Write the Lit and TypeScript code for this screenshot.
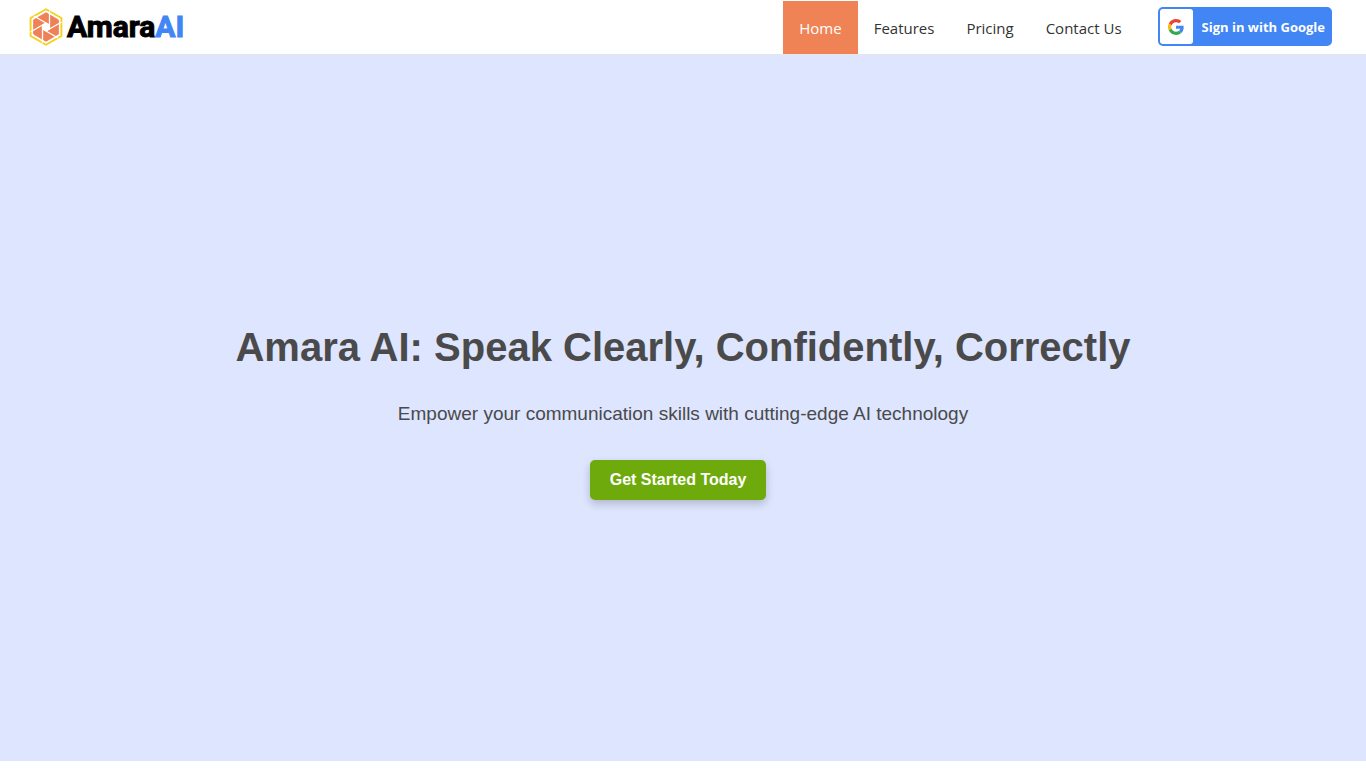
import { LitElement, html, css, svg } from "lit";
import { customElement, state } from "lit/decorators.js";

const links = ["Home", "Features", "Pricing", "Contact Us"];
const bladeAngles = [0, 60, 120, 180, 240, 300];

@customElement("app-root")
export class AppRoot extends LitElement {
  static styles = css`
    :host {
      display: block;
      min-height: 100vh;
      background: #fff;
      font-family: "Liberation Sans", Arial, sans-serif;
      color: #4a4a4a;
    }
    .header {
      display: flex;
      justify-content: space-between;
      align-items: stretch;
      height: 54px;
      padding: 0 34px 0 29px;
      border-bottom: 1px solid #e7e7e7;
    }
    .brand {
      display: flex;
      align-items: center;
      gap: 4px;
      text-decoration: none;
      color: #000;
    }
    .mark {
      width: 34px;
      height: 38px;
    }
    .name {
      font: bold 30px/54px Roboto, sans-serif;
      -webkit-text-stroke: 1px currentColor;
      stroke-linejoin: round;
    }
    .accent {
      color: #4285f4;
    }
    .menu {
      display: flex;
      align-items: stretch;
    }
    .nav {
      display: flex;
      margin-top: 1px;
    }
    .link {
      display: flex;
      align-items: center;
      padding: 0 16px;
      font: 400 15px/20px "Open Sans", "Noto Sans", sans-serif;
      color: #333;
      text-decoration: none;
    }
    .link.active {
      background: #f08355;
      color: #fff;
    }
    .google {
      display: flex;
      align-items: center;
      align-self: center;
      gap: 9px;
      height: 39px;
      margin: 0 0 1px 20px;
      padding: 2px 7px 2px 2px;
      border: 0;
      border-radius: 5px;
      background: #4285f4;
      color: #fff;
      font: 700 13px/20px "Open Sans", "Noto Sans", sans-serif;
      cursor: pointer;
    }
    .tile {
      display: grid;
      place-items: center;
      width: 33px;
      height: 35px;
      border-radius: 3px;
      background: #fff;
    }
    .g {
      width: 16px;
      height: 16px;
    }
    .hero {
      display: flex;
      flex-direction: column;
      align-items: center;
      justify-content: center;
      box-sizing: border-box;
      min-height: calc(100vh - 62px);
      padding: 6px 20px 0;
      background: #dde5ff;
      text-align: center;
    }
    .title {
      margin: 0 0 32px;
      font-size: 40px;
      line-height: 48px;
    }
    .lead {
      margin: 0 0 35px;
      font-size: 19px;
      line-height: 22px;
    }
    .cta {
      height: 40px;
      margin-right: 10px;
      padding: 0 20px;
      border: 0;
      border-radius: 5px;
      background: #6eaa0b;
      color: #fff;
      font: bold 16px/20px "Liberation Sans", Arial, sans-serif;
      box-shadow: 0 4px 8px rgba(0, 0, 0, 0.2);
      cursor: pointer;
    }
  `;

  @state() private current = "Home";

  private mark() {
    return html`<svg class="mark" viewBox="0 0 34 38" aria-hidden="true">
      <path d="M17 1.200 32.400 10v18L17 36.800 1.600 28V10Z" fill="#fff" stroke="#f8cf1c" stroke-width="1.900" stroke-linejoin="round" />
      <path d="M17 4.800 29.300 11.900v14.200L17 33.200 4.700 26.100V11.900Z" fill="#ef8157" stroke="#ef8157" stroke-width="1" stroke-linejoin="round" />
      <path d="M17 14.400 21 16.700v4.600L17 23.600l-4-2.300v-4.600Z" fill="#fff" />
      ${bladeAngles.map(
        (a) => svg`<path d="M20.500 21V3" transform=${`rotate(${a} 17 19)`} fill="none" stroke="#fff" stroke-width="1.300" />`
      )}
    </svg>`;
  }

  private google() {
    return html`<svg class="g" viewBox="0 0 48 48" aria-hidden="true">
      <path fill="#ea4335" d="M24 9.500c3.500 0 6.700 1.200 9.200 3.600l6.900-6.900C35.900 2.400 30.500 0 24 0 14.600 0 6.500 5.400 2.600 13.200l8 6.200C12.400 13.700 17.700 9.500 24 9.500z" />
      <path fill="#4285f4" d="M47 24.600c0-1.600-.2-3.100-.4-4.600H24v9h12.900c-.6 3-2.200 5.500-4.700 7.200l7.700 6C44.400 38 47 31.800 47 24.600z" />
      <path fill="#fbbc05" d="M10.500 28.600A14.500 14.500 0 0 1 10.500 19.400l-8-6.200a24 24 0 0 0 0 21.600z" />
      <path fill="#34a853" d="M24 48c6.500 0 11.900-2.100 15.900-5.800l-7.700-6c-2.200 1.500-4.900 2.300-8.200 2.300-6.300 0-11.600-4.200-13.500-9.900l-8 6.200C6.500 42.600 14.600 48 24 48z" />
    </svg>`;
  }

  render() {
    return html`
      <header class="header">
        <a class="brand" href="#">${this.mark()}<span class="name">Amara<span class="accent">AI</span></span></a>
        <div class="menu">
          <nav class="nav">
            ${links.map(
              (l) => html`<a
                class="link ${l === this.current ? "active" : ""}"
                href="#"
                @click=${() => (this.current = l)}
                >${l}</a
              >`
            )}
          </nav>
          <button class="google"><span class="tile">${this.google()}</span>Sign in with Google</button>
        </div>
      </header>
      <main class="hero">
        <h1 class="title">Amara AI: Speak Clearly, Confidently, Correctly</h1>
        <p class="lead">Empower your communication skills with cutting-edge AI technology</p>
        <button class="cta">Get Started Today</button>
      </main>
    `;
  }
}
